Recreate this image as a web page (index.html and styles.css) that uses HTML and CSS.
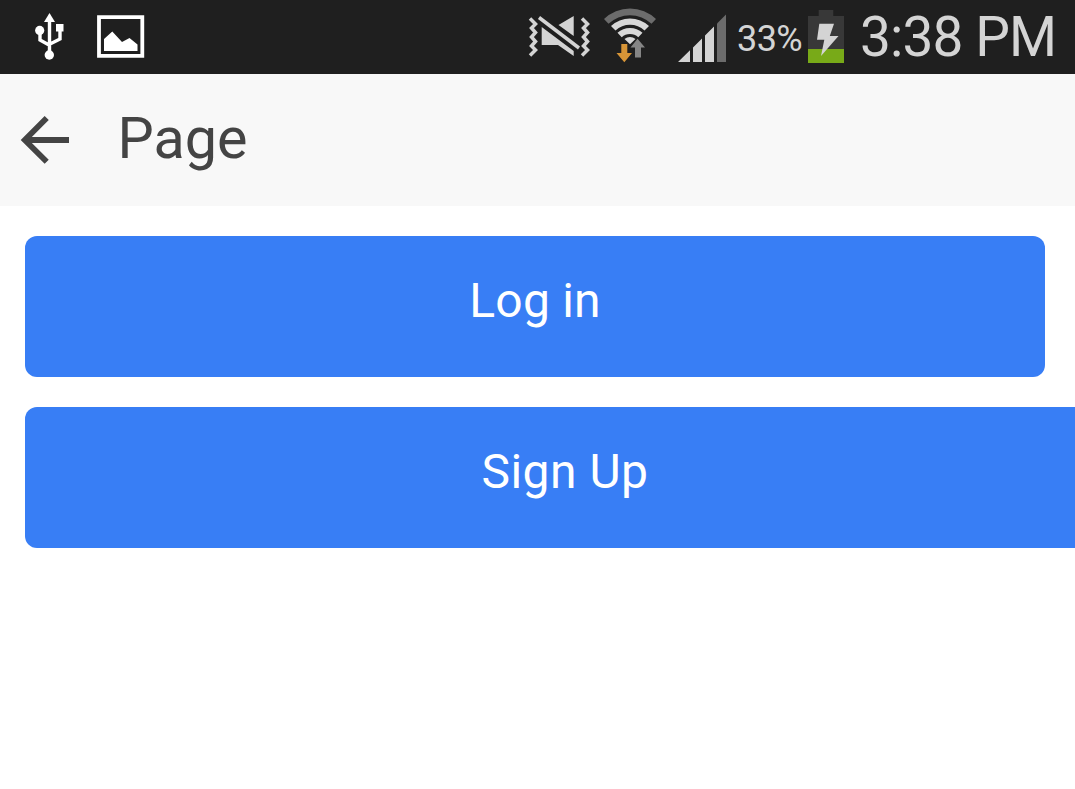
FILE: index.html
```html
<!DOCTYPE html>
<html lang="en">
<head>
<meta charset="utf-8">
<title>Page</title>
<link rel="stylesheet" href="styles.css">
</head>
<body>
<div class="status-bar">
  <div class="notifications">
    <svg class="icon" width="40" height="74" viewBox="30 0 40 74" fill="#fff">
      <path d="M49.5 13L55 22H44z"/>
      <path d="M49.5 20V52M40 31V40L49.5 45.3M60 29V39L49.5 44.3" fill="none" stroke="#fff" stroke-width="3.4"/>
      <circle cx="39.7" cy="30.4" r="4.6"/>
      <path d="M56 24h7.5v7.5H56z"/>
      <circle cx="49.3" cy="55" r="4.7"/>
    </svg>
    <svg class="icon" width="48" height="74" viewBox="97 0 48 74">
      <path d="M99 17.2h43.3v38.6H99z" fill="none" stroke="#fff" stroke-width="3.8"/>
      <path d="M104 51V39L112.3 31.5L122 42L129.5 38L137.5 44.5V51z" fill="#fff"/>
    </svg>
  </div>
  <div class="indicators">
    <svg class="icon" width="70" height="74" viewBox="525 0 70 74">
      <g fill="none" stroke="#d4d4d4" stroke-width="3.5">
        <path d="M530 18.5L535.5 24L531.5 28L535.5 32.5L531.5 37L535.5 41.5L531.5 46L535.5 50L530 55.5"/>
        <path d="M582 18.5L587.5 24L583.5 28L587.5 32.5L583.5 37L587.5 41.5L583.5 46L587.5 50L582 55.5"/>
        <path d="M539 17.5L579 48"/>
      </g>
      <path d="M573.7 16V36L558.5 25zM541.7 27L573.7 51V56L558 45H541.7z" fill="#d4d4d4"/>
    </svg>
    <svg class="icon wifi" width="60" height="74" viewBox="600 0 60 74">
      <g transform="translate(0 1)">
        <path d="M604 18A37.5 37.5 0 0 1 656 18L651.5 22.8A31 31 0 0 0 608.5 22.8z" fill="#6c6c6c"/>
        <path d="M611 25A28 28 0 0 1 649 25L644.5 29.5A21.3 21.3 0 0 0 615.5 29.5zM617.5 31.8A18.4 18.4 0 0 1 642.5 31.8L638.3 36.3A12 12 0 0 0 621.7 36.3zM624.5 38A8.6 8.6 0 0 1 635.5 38L630 43.3z" fill="#d8d8d8"/>
      </g>
      <path d="M637.5 38.7L645 47.5H641V57.5H635V47.5H630.5z" fill="#858585"/>
      <path d="M621.3 44H627.3V53H632L624.3 62.3L616.5 53H621.3z" fill="#d79537"/>
    </svg>
    <svg class="icon signal" width="50" height="74" viewBox="678 0 50 74">
      <path d="M678 62L690 50.3V62zM693 62V47.5L702 38.5V62zM705 62V35.5L714 26.5V62z" fill="#d4d4d4"/>
      <path d="M717 62V23.5L726 14.5V62z" fill="#6c6c6c"/>
    </svg>
    <span class="percent">33%</span>
    <svg class="icon battery" width="36" height="74" viewBox="808 0 36 74">
      <path d="M808 16h10.7v-6h14.6v6H844v33H808z" fill="#383838"/>
      <path d="M808 49h36v14h-36z" fill="#78aa18"/>
      <path d="M819.3 23.7H834L829.8 36H838.5L821 56L824.3 39.8H817z" fill="#d4d4d4"/>
    </svg>
    <span class="clock">3:38 PM</span>
  </div>
</div>
<header class="header">
  <svg class="back" width="50" height="50" viewBox="20 115 50 50" fill="none" stroke="#444" stroke-width="5.8">
    <path d="M69 140H25M46.7 118L24.8 140L46.7 161.8"/>
  </svg>
  <h1 class="title">Page</h1>
</header>
<main class="content">
  <button class="button">Log in</button>
  <button class="button overflowing">Sign Up</button>
</main>
</body>
</html>
```
FILE: styles.css
```css
* { box-sizing: border-box; }
body {
  margin: 0;
  height: 789px;
  overflow: hidden;
  background: #fff;
  font-family: Roboto, "Liberation Sans", sans-serif;
}
.status-bar {
  display: flex;
  justify-content: space-between;
  height: 74px;
  background: #1f1f1f;
  color: #d4d4d4;
}
.icon { display: block; flex: none; }
.notifications { display: flex; gap: 27px; padding-left: 30px; }
.indicators { display: flex; width: 550px; white-space: nowrap; }
.wifi { margin-left: 5px; }
.signal { margin-left: 18px; }
.percent {
  width: 71px;
  margin-left: 9px;
  padding-top: 2px;
  font-size: 36px;
  letter-spacing: -0.6px;
  line-height: 74px;
}
.clock {
  margin-left: 16px;
  font-size: 55px;
  letter-spacing: -0.9px;
  line-height: 74px;
}
.header {
  display: flex;
  align-items: flex-start;
  height: 132px;
  padding: 41px 0 0 20px;
  background: #f8f8f8;
}
.back { flex: none; }
.title {
  margin: -11px 0 0 47.5px;
  color: #444;
  font-size: 57.5px;
  font-weight: 400;
  line-height: 70px;
}
.content {
  display: flex;
  flex-direction: column;
  align-items: flex-start;
  gap: 30px;
  padding: 30px 0 0 25px;
}
.button {
  flex: none;
  width: 1020px;
  height: 141px;
  padding: 0 0 12px;
  border: 0;
  border-radius: 12px;
  background: #387ef5;
  color: #fff;
  font: 400 48px/129px Roboto, "Liberation Sans", sans-serif;
  letter-spacing: 0.2px;
}
.overflowing { width: 1080px; letter-spacing: 0.5px; }
```
